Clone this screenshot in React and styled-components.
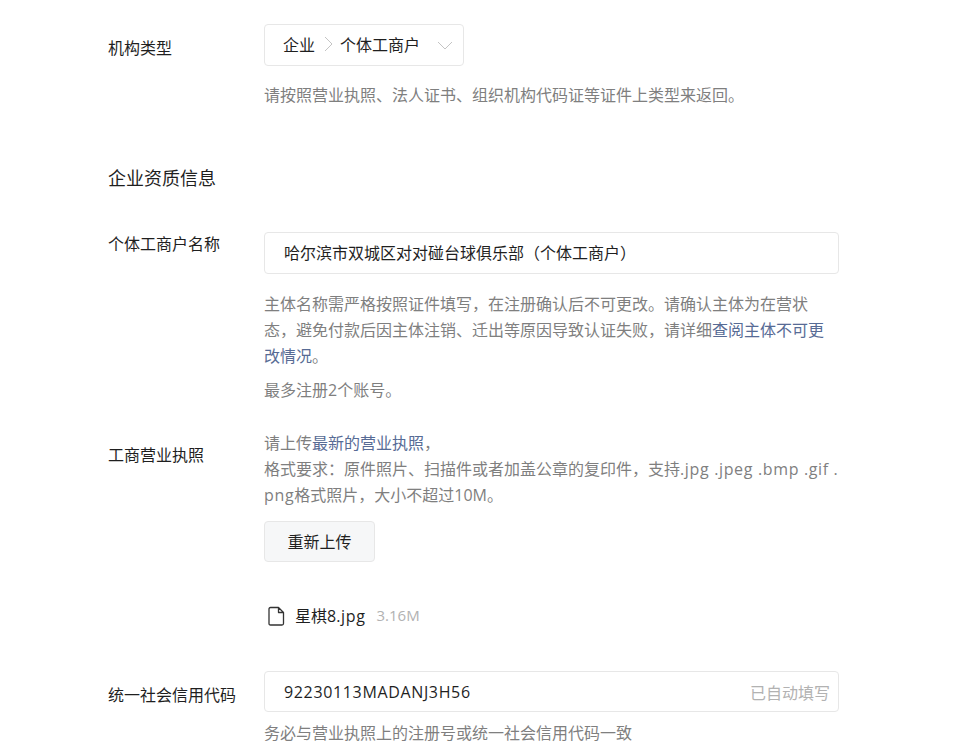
import React from 'react';
import styled, { createGlobalStyle } from 'styled-components';

const GlobalStyle = createGlobalStyle`
  html, body {
    margin: 0;
    background: #fff;
    font-family: "Open Sans", "Noto Sans CJK SC", sans-serif;
    font-size: 16px;
    color: #1f1f1f;
  }
`;

const Page = styled.div`
  width: 976px;
  height: 743px;
  overflow: hidden;
  padding: 24px 0 0 108px;
  box-sizing: border-box;
`;

const Row = styled.div`
  display: flex;
  margin-top: ${({ top }) => top || 0}px;
`;

const Label = styled.div`
  width: 156px;
  flex: none;
  padding-top: ${({ pad }) => pad || 0}px;
  line-height: 24px;
  color: #1f1f1f;
`;

const Control = styled.div`
  width: 575px;
`;

const SelectBox = styled.div`
  width: 200px;
  height: 42px;
  box-sizing: border-box;
  border: 1px solid #e7e7e7;
  border-radius: 4px;
  display: flex;
  align-items: center;
  padding: 0 9px 2px 18px;
`;

const Crumb = styled.span`
  white-space: nowrap;
`;

const Chevron = styled.svg`
  flex: none;
  display: block;
`;

const SelectArrow = styled(Chevron)`
  margin-left: auto;
`;

const Field = styled.div`
  height: ${({ $short }) => ($short ? 41 : 42)}px;
  box-sizing: border-box;
  border: 1px solid #e7e7e7;
  border-radius: 4px;
  display: flex;
  align-items: center;
  justify-content: space-between;
  padding: 0 8px ${({ $short }) => ($short ? 0 : 2)}px 19px;
  color: #1f1f1f;
`;

const AutoTag = styled.span`
  color: #b2b2b2;
`;

const Hint = styled.p`
  margin: ${({ top }) => top || 0}px 0 0;
  line-height: 26px;
  color: #7f7f7f;
  word-break: break-all;
`;

const Link = styled.span`
  color: #576b95;
`;

/* the reference's latin runs wider than Open Sans */
const Latin = styled.span`
  letter-spacing: 0.65px;
`;

const SectionTitle = styled.h2`
  margin: 58px 0 0;
  font-size: 18px;
  font-weight: 400;
  line-height: 24px;
  color: #1f1f1f;
`;

const UploadButton = styled.button`
  display: block;
  width: 111px;
  height: 41px;
  margin-top: 13px;
  padding: 0 0 2px;
  border: 1px solid #e7e7e7;
  border-radius: 4px;
  background: #f6f7f8;
  font: inherit;
  color: #1f1f1f;
`;

const FileRow = styled.div`
  display: flex;
  align-items: center;
  margin: 42px 0 0 4px;
  height: 24px;
`;

const FileName = styled.span`
  margin-left: 9px;
  padding-bottom: 2px;
  color: #1f1f1f;
`;

const FileSize = styled.span`
  margin-left: 11px;
  padding-bottom: 2px;
  font-size: 15px;
  color: #b2b2b2;
`;

const App = () => (
  <Page>
    <GlobalStyle />
    <Row>
      <Label pad={12}>机构类型</Label>
      <Control>
        <SelectBox>
          <Crumb>企业</Crumb>
          <Chevron width="25" height="16" viewBox="0 0 25 16" fill="none">
            <path d="M10 1 L17 8 L10 15" stroke="#c4c4c4" strokeWidth="1" />
          </Chevron>
          <Crumb>个体工商户</Crumb>
          <SelectArrow width="18" height="18" viewBox="0 0 18 18" fill="none">
            <path d="M2 7 L9 14 L16 7" stroke="#c4c4c4" strokeWidth="1" />
          </SelectArrow>
        </SelectBox>
        <Hint top={16}>请按照营业执照、法人证书、组织机构代码证等证件上类型来返回。</Hint>
      </Control>
    </Row>
    <SectionTitle>企业资质信息</SectionTitle>
    <Row top={42}>
      <Label>个体工商户名称</Label>
      <Control>
        <Field>哈尔滨市双城区对对碰台球俱乐部（个体工商户）</Field>
        <Hint top={17}>
          主体名称需严格按照证件填写，在注册确认后不可更改。请确认主体为在营状态，避免付款后因主体注销、迁出等原因导致认证失败，请详细
          <Link>查阅主体不可更改情况</Link>。
        </Hint>
        <Hint top={8}>最多注册2个账号。</Hint>
      </Control>
    </Row>
    <Row top={27}>
      <Label pad={13}>工商营业执照</Label>
      <Control>
        <Hint>
          请上传<Link>最新的营业执照</Link>，
          <br />
          格式要求：原件照片、扫描件或者加盖公章的复印件，支持<Latin>.jpg .jpeg .bmp .gif .png</Latin>格式照片，大小不超过10M。
        </Hint>
        <UploadButton>重新上传</UploadButton>
        <FileRow>
          <svg width="18" height="20" viewBox="0 0 18 20" fill="none">
            <path d="M1 3 Q1 1.5 2.5 1.5 H10.5 L15.5 6.5 V17.5 Q15.5 19 14 19 H2.5 Q1 19 1 17.5 Z M10.5 1.5 V6.5 H15.5" stroke="#333" strokeWidth="1.3" strokeLinejoin="round" />
          </svg>
          <FileName>星棋8<Latin>.jpg</Latin></FileName>
          <FileSize>3.16M</FileSize>
        </FileRow>
      </Control>
    </Row>
    <Row top={43}>
      <Label pad={12}>统一社会信用代码</Label>
      <Control>
        <Field $short>
          <Latin>92230113MADANJ3H56</Latin>
          <AutoTag>已自动填写</AutoTag>
        </Field>
        <Hint top={8}>务必与营业执照上的注册号或统一社会信用代码一致</Hint>
      </Control>
    </Row>
  </Page>
);

export default App;
